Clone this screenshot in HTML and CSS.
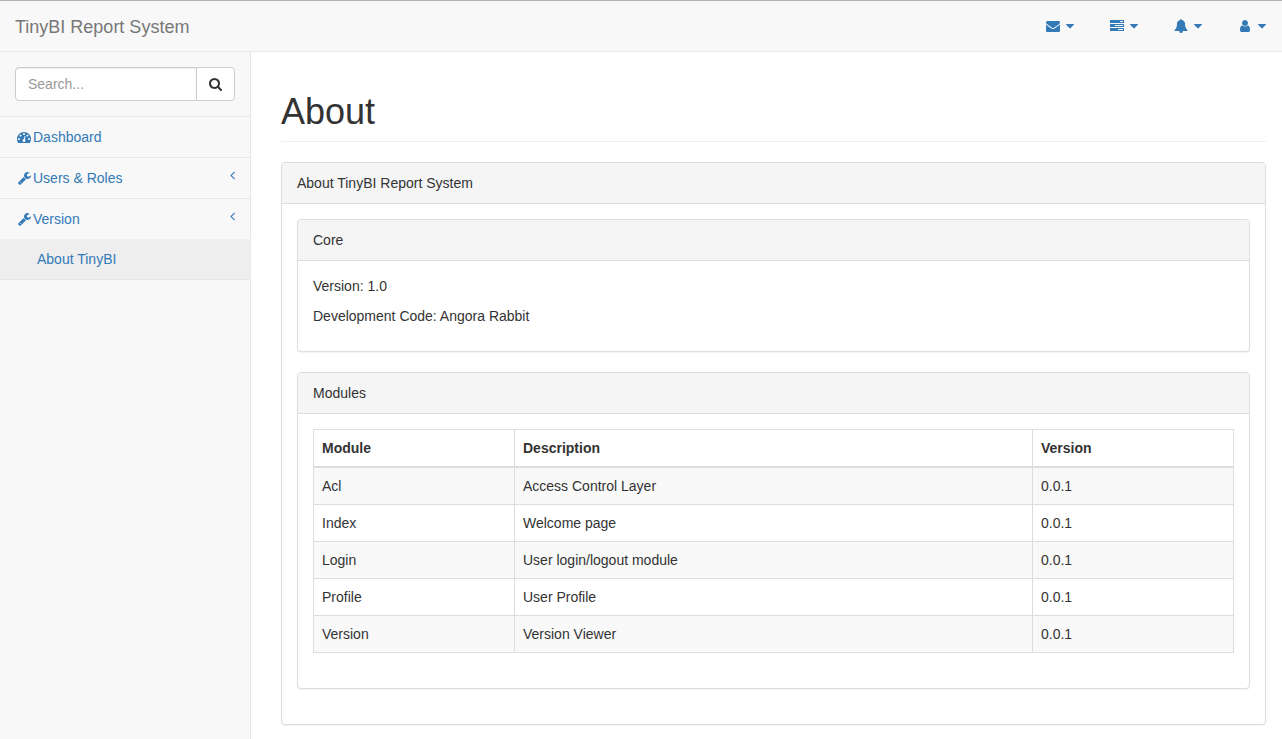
FILE: index.html
```html
<!DOCTYPE html>
<html lang="en">
<head>
<meta charset="utf-8">
<meta name="viewport" content="width=device-width, initial-scale=1">
<title>TinyBI Report System</title>
<link rel="stylesheet" href="styles.css">
</head>
<body>
<svg class="sprite" aria-hidden="true">
  <symbol id="caret" viewBox="384 0 1024 1792"><path d="M1408 704q0 26-19 45l-448 448q-19 19-45 19t-45-19l-448-448q-19-19-19-45t19-45 45-19h896q26 0 45 19t19 45z"/></symbol>
  <symbol id="wrench" viewBox="-64 0 1792 1792"><path d="M448 1472q0-26-19-45t-45-19-45 19-19 45 19 45 45 19 45-19 19-45zm644-420l-682 682q-37 37-90 37-52 0-91-37l-106-108q-38-36-38-90 0-53 38-91l681-681q39 98 114.500 173.500t173.500 114.500zm634-435q0 39-23 106-47 134-164.500 217.500t-258.500 83.500q-185 0-316.500-131.500t-131.500-316.500 131.500-316.500 316.500-131.500q58 0 121.500 16.500t107.500 46.500q16 11 16 28t-16 28l-293 169v224l193 107q5-3 79-48.500t135.500-81 70.500-35.500q15 0 23.500 10t8.500 25z"/></symbol>
  <symbol id="angle-left" viewBox="576 0 640 1792"><path d="M1203 544q0 13-10 23l-393 393 393 393q10 10 10 23t-10 23l-50 50q-10 10-23 10t-23-10l-466-466q-10-10-10-23t10-23l466-466q10-10 23-10t23 10l50 50q10 10 10 23z"/></symbol>
</svg>
<header class="navbar">
  <a class="brand" href="#">TinyBI Report System</a>
  <nav class="top-links" aria-label="Account">
    <a class="top-link" href="#" aria-label="Messages">
      <svg class="icon" viewBox="0 0 1792 1792"><path d="M1792 710v794q0 66-47 113t-113 47h-1472q-66 0-113-47t-47-113v-794q44 49 101 87 362 246 497 345 57 42 92.500 65.500t94.500 48 110 24.500h2q51 0 110-24.500t94.500-48 92.500-65.500q170-123 498-345 57-39 100-87zm0-294q0 79-49 151t-122 123q-376 261-468 325-10 7-42.500 31t-54 38.500-52 32.500-57.500 27-50 9h-2q-23 0-50-9t-57.500-27-52-32.500-54-38.500-42.500-31q-91-64-262-182.500t-205-142.500q-62-42-117-115.500t-55-136.500q0-78 41.500-130t118.500-52h1472q65 0 112.500 47t47.500 113z"/></svg>
      <svg class="caret"><use href="#caret"/></svg>
    </a>
    <a class="top-link" href="#" aria-label="Tasks">
      <svg class="icon" viewBox="0 0 14 14"><path fill-rule="evenodd" d="M0 1h14v3h-14zM10 2v1h3v-1zM0 5h14v3h-14zM5 6v1h8v-1zM0 9h14v3h-14zM8 10v1h5v-1z"/></svg>
      <svg class="caret"><use href="#caret"/></svg>
    </a>
    <a class="top-link" href="#" aria-label="Alerts">
      <svg class="icon" viewBox="0 0 1792 1792"><path d="M912 1696q0-16-16-16-59 0-101.500-42.500t-42.500-101.500q0-16-16-16t-16 16q0 73 51.500 124.500t124.500 51.500q16 0 16-16zm816-288q0 52-38 90t-90 38h-448q0 106-75 181t-181 75-181-75-75-181h-448q-52 0-90-38t-38-90q50-42 91-88t85-119.500 74.500-158.500 50-206 19.500-260q0-152 117-282.500t307-158.500q-8-19-8-39 0-40 28-68t68-28 68 28 28 68q0 20-8 39 190 28 307 158.500t117 282.500q0 139 19.500 260t50 206 74.500 158.500 85 119.500 91 88z"/></svg>
      <svg class="caret"><use href="#caret"/></svg>
    </a>
    <a class="top-link" href="#" aria-label="User">
      <svg class="icon" viewBox="0 0 1792 1792"><path d="M1536 1399q0 109-62.500 187t-150.500 78h-854q-88 0-150.500-78t-62.500-187q0-85 8.500-160.500t31.500-152 58.500-131 94-89 134.500-34.500q131 128 313 128t313-128q76 0 134.500 34.500t94 89 58.500 131 31.500 152 8.500 160.500zm-256-887q0 159-112.500 271.500t-271.500 112.500-271.500-112.500-112.500-271.500 112.500-271.500 271.500-112.500 271.500 112.500 112.500 271.500z"/></svg>
      <svg class="caret"><use href="#caret"/></svg>
    </a>
  </nav>
</header>
<div class="layout">
  <aside class="sidebar">
    <form class="search" role="search">
      <input class="search-input" type="text" placeholder="Search..." aria-label="Search">
      <button class="search-button" type="button" aria-label="Search">
        <svg class="icon icon-search" viewBox="64 0 1664 1792"><path d="M1216 832q0-185-131.500-316.500t-316.500-131.500-316.500 131.500-131.500 316.500 131.500 316.500 316.500 131.500 316.500-131.500 131.500-316.500zm512 832q0 52-38 90t-90 38q-54 0-90-38l-343-342q-179 124-399 124-143 0-273.500-55.500t-225-150-150-225-55.500-273.500 55.500-273.500 150-225 225-150 273.500-55.500 273.500 55.500 225 150 150 225 55.500 273.500q0 220-124 399l343 343q37 37 37 90z"/></svg>
      </button>
    </form>
    <ul class="menu">
      <li class="menu-item"><a class="menu-link" href="#"><svg class="icon" viewBox="0 0 1792 1792"><path d="M384 1152q0-53-37.500-90.500t-90.500-37.500-90.500 37.500-37.500 90.500 37.500 90.500 90.500 37.500 90.500-37.500 37.500-90.500zm192-448q0-53-37.500-90.500t-90.500-37.500-90.500 37.500-37.500 90.500 37.500 90.500 90.500 37.500 90.500-37.500 37.500-90.500zm428 481l101-382q6-26-7.500-48.500t-38.500-29.500-48 6.500-30 39.500l-101 382q-60 5-107 43.500t-63 98.500q-20 77 20 146t117 89 146-20 89-117q16-60-6-117t-72-91zm660-33q0-53-37.500-90.500t-90.500-37.500-90.500 37.500-37.500 90.500 37.500 90.500 90.500 37.500 90.500-37.500 37.500-90.500zm-640-640q0-53-37.500-90.500t-90.500-37.500-90.500 37.500-37.500 90.500 37.500 90.500 90.500 37.500 90.500-37.500 37.500-90.500zm448 192q0-53-37.500-90.500t-90.500-37.500-90.500 37.500-37.500 90.500 37.500 90.500 90.500 37.500 90.500-37.500 37.500-90.500zm320 448q0 261-141 483-19 29-54 29h-1402q-35 0-54-29-141-221-141-483 0-182 71-348t191-286 286-191 348-71 348 71 286 191 191 286 71 348z"/></svg>Dashboard</a></li>
      <li class="menu-item"><a class="menu-link" href="#"><svg class="icon"><use href="#wrench"/></svg>Users &amp; Roles<svg class="arrow"><use href="#angle-left"/></svg></a></li>
      <li class="menu-item">
        <a class="menu-link" href="#"><svg class="icon"><use href="#wrench"/></svg>Version<svg class="arrow"><use href="#angle-left"/></svg></a>
        <ul class="submenu">
          <li><a class="submenu-link" href="#" aria-current="page">About TinyBI</a></li>
        </ul>
      </li>
    </ul>
  </aside>
  <main class="content">
    <h1 class="page-header">About</h1>
    <section class="panel">
      <div class="panel-heading">About TinyBI Report System</div>
      <div class="panel-body">
        <section class="panel">
          <div class="panel-heading">Core</div>
          <div class="panel-body">
            <p class="line">Version: 1.0</p>
            <p class="line">Development Code: Angora Rabbit</p>
          </div>
        </section>
        <section class="panel">
          <div class="panel-heading">Modules</div>
          <div class="panel-body">
            <table class="table">
              <colgroup><col class="col-side"><col><col class="col-side"></colgroup>
              <thead>
                <tr><th>Module</th><th>Description</th><th>Version</th></tr>
              </thead>
              <tbody>
                <tr><td>Acl</td><td>Access Control Layer</td><td>0.0.1</td></tr>
                <tr><td>Index</td><td>Welcome page</td><td>0.0.1</td></tr>
                <tr><td>Login</td><td>User login/logout module</td><td>0.0.1</td></tr>
                <tr><td>Profile</td><td>User Profile</td><td>0.0.1</td></tr>
                <tr><td>Version</td><td>Version Viewer</td><td>0.0.1</td></tr>
              </tbody>
            </table>
          </div>
        </section>
      </div>
    </section>
  </main>
</div>
</body>
</html>
```
FILE: styles.css
```css
* {
  box-sizing: border-box;
}

body {
  display: flex;
  flex-direction: column;
  min-height: 100vh;
  margin: 0;
  border-top: 1px solid #b5b2ad;
  background: #f8f8f8;
  color: #333;
  font-family: "Liberation Sans", Arial, sans-serif;
  font-size: 14px;
  line-height: 20px;
}

a {
  color: #337ab7;
  text-decoration: none;
}

ul {
  margin: 0;
  padding: 0;
  list-style: none;
}

.sprite {
  display: none;
}

.icon {
  flex: none;
  width: 14px;
  height: 14px;
  fill: currentColor;
}

.icon-search {
  width: 13px;
}

.caret {
  width: 8px;
  height: 14px;
  fill: currentColor;
}

.navbar {
  display: flex;
  justify-content: space-between;
  align-items: center;
  min-height: 51px;
  border-bottom: 1px solid #e7e7e7;
}

.brand {
  padding: 16px 15px 14px;
  color: #777;
  font-size: 18px;
}

.top-links {
  display: flex;
  gap: 4px;
}

.top-link {
  display: flex;
  align-items: center;
  gap: 6px;
  height: 50px;
  padding: 15px 16px;
}

.layout {
  display: flex;
  flex: 1;
}

.sidebar {
  flex: none;
  width: 250px;
}

.search {
  display: flex;
  padding: 15px;
  border-bottom: 1px solid #e7e7e7;
}

.search-input {
  flex: 1;
  min-width: 0;
  height: 34px;
  padding: 6px 12px;
  border: 1px solid #ccc;
  border-radius: 4px 0 0 4px;
  background: #fff;
  box-shadow: inset 0 1px 1px rgba(0, 0, 0, 0.075);
  color: #555;
  font: inherit;
}

.search-input::placeholder {
  color: #999;
}

.search-button {
  display: flex;
  align-items: center;
  justify-content: center;
  width: 39px;
  height: 34px;
  margin-left: -1px;
  padding: 0;
  border: 1px solid #ccc;
  border-radius: 0 4px 4px 0;
  background: #fff;
  color: #333;
}

.menu-item {
  border-bottom: 1px solid #e7e7e7;
}

.menu-link {
  display: flex;
  align-items: center;
  gap: 2px;
  height: 40px;
  padding: 10px 15px 10px 17px;
}

.arrow {
  width: 5px;
  height: 14px;
  margin: 0 0 6px auto;
  fill: currentColor;
}

.submenu-link {
  display: block;
  padding: 10px 15px 10px 37px;
  background: #eee;
}

.content {
  flex: 1;
  min-width: 0;
  padding: 0 16px 0 30px;
  border-left: 1px solid #e7e7e7;
  background: #fff;
}

.page-header {
  margin: 40px 0 20px;
  padding-bottom: 9px;
  border-bottom: 1px solid #eee;
  font-size: 36px;
  font-weight: 500;
  line-height: 40px;
}

.panel {
  border: 1px solid #ddd;
  border-radius: 4px;
  background: #fff;
  box-shadow: 0 1px 1px rgba(0, 0, 0, 0.05);
}

.panel .panel {
  margin-bottom: 20px;
}

.panel-heading {
  padding: 10px 15px;
  border-bottom: 1px solid #ddd;
  border-radius: 3px 3px 0 0;
  background: #f5f5f5;
}

.panel-body {
  padding: 15px;
}

.line {
  margin: 0 0 10px;
}

.table {
  width: 100%;
  margin-bottom: 20px;
  border: 1px solid #ddd;
  border-collapse: collapse;
  table-layout: fixed;
}

.col-side {
  width: 201px;
}

.table th,
.table td {
  padding: 8px;
  border: 1px solid #ddd;
  text-align: left;
}

.table th {
  border-bottom-width: 2px;
}

.table tbody tr:nth-child(odd) {
  background: #f9f9f9;
}
```
